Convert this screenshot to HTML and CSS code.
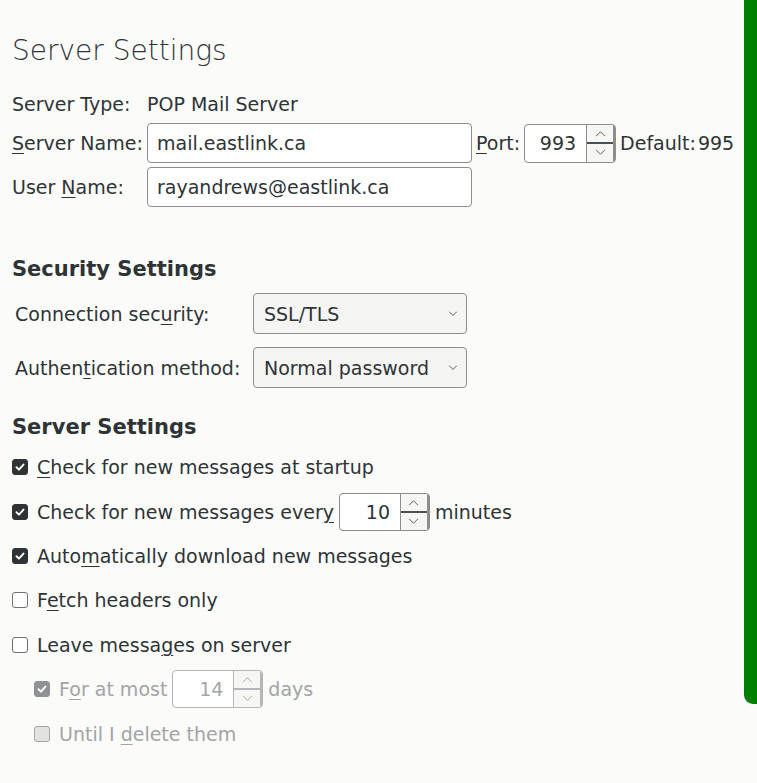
FILE: index.html
```html
<!DOCTYPE html>
<html lang="en">
<head>
  <meta charset="UTF-8">
  <meta name="viewport" content="width=device-width, initial-scale=1.0">
  <title>Server Settings</title>
  <link rel="stylesheet" href="styles.css">
</head>
<body>

  <div class="page">
    <main class="settings">
      <h1 class="page-title">Server Settings</h1>

      <!-- Server identity -->
      <div class="server-grid">
        <span class="label">Server Type:</span>
        <span class="value">POP Mail Server</span>

        <label class="label"><u>S</u>erver Name:</label>
        <div class="name-row">
          <input class="text-input" type="text" value="mail.eastlink.ca">
          <label class="port-label"><u>P</u>ort:</label>
          <div class="spin spin-port">
            <input class="spin-value" type="text" value="993">
            <div class="spin-buttons">
              <span class="spin-btn">
                <svg viewBox="0 0 12 8" width="11" height="7"><path d="M1 7 L6 2 L11 7" /></svg>
              </span>
              <span class="spin-btn">
                <svg viewBox="0 0 12 8" width="11" height="7"><path d="M1 1 L6 6 L11 1" /></svg>
              </span>
            </div>
          </div>
          <span class="default-port"><span>Default:</span><span>995</span></span>
        </div>

        <label class="label">User <u>N</u>ame:</label>
        <div class="name-row">
          <input class="text-input" type="text" value="rayandrews@eastlink.ca">
        </div>
      </div>

      <!-- Security -->
      <h2 class="section-title security-title">Security Settings</h2>
      <div class="security-grid">
        <label class="label">Connection sec<u>u</u>rity:</label>
        <div class="select">
          <span>SSL/TLS</span>
          <svg viewBox="0 0 12 8" width="10" height="6"><path d="M1 1 L6 6 L11 1" /></svg>
        </div>

        <label class="label">Authen<u>t</u>ication method:</label>
        <div class="select">
          <span>Normal password</span>
          <svg viewBox="0 0 12 8" width="10" height="6"><path d="M1 1 L6 6 L11 1" /></svg>
        </div>
      </div>

      <!-- Fetching -->
      <h2 class="section-title">Server Settings</h2>
      <div class="check-list">
        <div class="check-row">
          <span class="box checked"><svg viewBox="0 0 16 16"><path d="M4 8.3 L6.8 11 L12 5.2" /></svg></span>
          <span><u>C</u>heck for new messages at startup</span>
        </div>
        <div class="check-row">
          <span class="box checked"><svg viewBox="0 0 16 16"><path d="M4 8.3 L6.8 11 L12 5.2" /></svg></span>
          <span>Check for new messages ever<u>y</u></span>
          <div class="spin spin-small">
            <input class="spin-value" type="text" value="10">
            <div class="spin-buttons">
              <span class="spin-btn">
                <svg viewBox="0 0 12 8" width="11" height="7"><path d="M1 7 L6 2 L11 7" /></svg>
              </span>
              <span class="spin-btn">
                <svg viewBox="0 0 12 8" width="11" height="7"><path d="M1 1 L6 6 L11 1" /></svg>
              </span>
            </div>
          </div>
          <span>minutes</span>
        </div>
        <div class="check-row">
          <span class="box checked"><svg viewBox="0 0 16 16"><path d="M4 8.3 L6.8 11 L12 5.2" /></svg></span>
          <span>Auto<u>m</u>atically download new messages</span>
        </div>
        <div class="check-row">
          <span class="box"></span>
          <span>F<u>e</u>tch headers only</span>
        </div>
        <div class="check-row">
          <span class="box"></span>
          <span>Leave messa<u>g</u>es on server</span>
        </div>
        <div class="check-row nested disabled">
          <span class="box checked"><svg viewBox="0 0 16 16"><path d="M4 8.3 L6.8 11 L12 5.2" /></svg></span>
          <span>F<u>o</u>r at most</span>
          <div class="spin spin-small">
            <input class="spin-value" type="text" value="14" disabled>
            <div class="spin-buttons">
              <span class="spin-btn">
                <svg viewBox="0 0 12 8" width="11" height="7"><path d="M1 7 L6 2 L11 7" /></svg>
              </span>
              <span class="spin-btn">
                <svg viewBox="0 0 12 8" width="11" height="7"><path d="M1 1 L6 6 L11 1" /></svg>
              </span>
            </div>
          </div>
          <span>days</span>
        </div>
        <div class="check-row nested disabled">
          <span class="box"></span>
          <span>Until I <u>d</u>elete them</span>
        </div>
      </div>
    </main>

    <div class="side-bar"></div>
  </div>

</body>
</html>
```

FILE: styles.css
```css
/* Basic Styles */
body {
  margin: 0;
  background-color: #fbfbfa;
  color: #2e3436;
  font-family: "DejaVu Sans", sans-serif;
  font-size: 19px;
}

.page {
  display: flex;
  min-height: 100vh;
}

.settings {
  flex: 1;
  padding: 0 0 0 12px;
}

.side-bar {
  width: 13px;
  height: 704px;
  background-color: #008000;
  border-bottom-left-radius: 9px;
}

u {
  text-underline-offset: 3px;
  text-decoration-thickness: 1px;
}

.page-title {
  margin: 33px 0 20px;
  font-size: 28px;
  font-weight: 200;
  line-height: 36px;
}

.label {
  white-space: nowrap;
}

/* Server name / user rows */
.server-grid {
  display: grid;
  grid-template-columns: 135px auto;
  column-gap: 0;
  row-gap: 4px;
  align-items: center;
}

.value {
  line-height: 30px;
}

.name-row {
  display: flex;
  align-items: center;
}

.text-input {
  box-sizing: border-box;
  width: 325px;
  height: 40px;
  padding: 0 9px;
  border: 1px solid #8d8d8d;
  border-radius: 4px;
  background: #fff;
  color: inherit;
  font: inherit;
}

.port-label {
  margin: 0 4px 0 4px;
}

.default-port {
  display: flex;
  gap: 2px;
  margin-left: 4px;
  white-space: nowrap;
}

/* Number spinner */
.spin {
  display: flex;
  box-sizing: border-box;
  height: 39px;
  border: 1px solid #8d8d8d;
  border-radius: 4px;
  background: #fff;
  overflow: hidden;
}

.spin-port {
  width: 92px;
}

.spin-small {
  width: 91px;
  height: 38px;
  margin: 0 5px 0 5px;
}

.spin-value {
  width: 0;
  flex: 1;
  min-width: 0;
  padding: 0 10px 0 0;
  border: none;
  background: transparent;
  color: inherit;
  font: inherit;
  text-align: right;
  outline: none;
}

.spin-buttons {
  display: flex;
  flex-direction: column;
  width: 26px;
  border-left: 1px solid #8d8d8d;
  border-right: 2px solid #8d8d8d;
}

.spin-btn {
  flex: 1;
  display: flex;
  align-items: center;
  justify-content: center;
  background: #f6f6f5;
}

.spin-btn + .spin-btn {
  border-top: 2px solid #4a4f52;
}

.spin-btn svg path {
  fill: none;
  stroke: #555a5c;
  stroke-width: 1.1;
}

/* Security selects */
.section-title {
  margin: 0;
  font-size: 21px;
  font-weight: bold;
  line-height: 28px;
}

.security-title {
  margin-top: 48px;
}

.security-grid {
  display: grid;
  grid-template-columns: 238px 214px;
  row-gap: 13px;
  align-items: center;
  margin: 10px 0 25px 3px;
}

.select {
  display: flex;
  align-items: center;
  justify-content: space-between;
  box-sizing: border-box;
  height: 41px;
  padding: 0 8px 0 10px;
  border: 1px solid #8d8d8d;
  border-radius: 4px;
  background: #f5f5f4;
}

.select svg path {
  fill: none;
  stroke: #3f4446;
  stroke-width: 1.1;
}

/* Checkbox list */
.check-list {
  display: flex;
  flex-direction: column;
  margin-top: 4px;
}

.check-row {
  display: flex;
  align-items: center;
  height: 44.4px;
}

.check-row.nested {
  padding-left: 22px;
}

.box {
  box-sizing: border-box;
  width: 16px;
  height: 16px;
  margin-right: 9px;
  border: 1px solid #6e7274;
  border-radius: 3px;
  background: #fff;
}

.box svg {
  display: block;
  width: 14px;
  height: 14px;
}

.box svg path {
  fill: none;
  stroke: #fff;
  stroke-width: 2.2;
  stroke-linecap: round;
  stroke-linejoin: round;
}

.box.checked {
  background: #2e3436;
  border-color: #2e3436;
}

.disabled {
  color: #a2a4a5;
}

.disabled .box {
  background: #e2e2e2;
  border-color: #a2a4a5;
}

.disabled .box.checked {
  background: #8f9193;
  border-color: #8f9193;
}

.disabled .spin {
  border-color: #b5b6b7;
}

.disabled .spin-value {
  color: #a2a4a5;
}

.disabled .spin-buttons {
  border-color: #b5b6b7;
}

.disabled .spin-btn + .spin-btn {
  border-top-color: #b5b6b7;
}

.disabled .spin-btn svg path {
  stroke: #a2a4a5;
}
```
